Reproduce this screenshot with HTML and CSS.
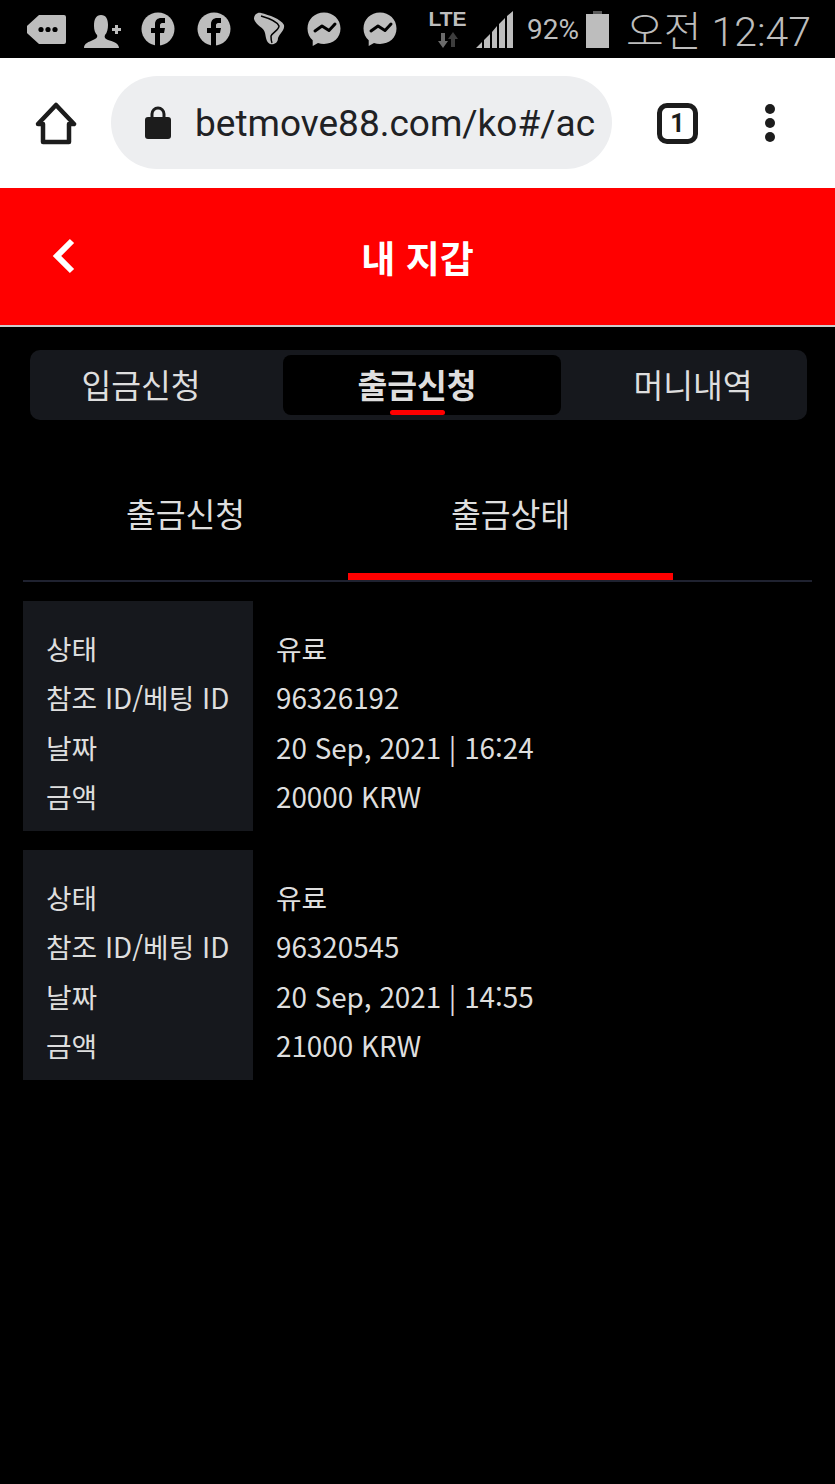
FILE: index.html
```html
<!DOCTYPE html>
<html lang="ko">
<head>
    <meta charset="UTF-8">
    <meta name="viewport" content="width=device-width, initial-scale=1.0">
    <title>내 지갑</title>
    <link rel="stylesheet" href="styles.css">
</head>
<body>

<div class="status-bar">
    <div class="status-left">
        <svg class="icon-tag" viewBox="0 0 39 31"><path d="M12 1H37a2 2 0 0 1 2 2V28a2 2 0 0 1-2 2H12L1 20a6 6 0 0 1 0-9z" fill="#bdbdbd"/><circle cx="14" cy="15.500" r="2.600" fill="#000"/><circle cx="21" cy="15.500" r="2.600" fill="#000"/><circle cx="28" cy="15.500" r="2.600" fill="#000"/></svg>
        <svg class="icon-person" viewBox="0 0 38 34"><path d="M0 34c0-5 5-6 9-8 3-1 5-3 4-5-2-2-3-5-3-9 0-7 2-11 7-11s7 4 7 10c0 4-1 8-3 10-1 2 0 4 3 5 4 1 11 3 11 8z" fill="#bdbdbd"/><path d="M28 14h3v-3h3v3h3v3h-3v3h-3v-3h-3z" fill="#bdbdbd"/></svg>
        <svg class="icon-round" viewBox="0 0 34 34"><circle cx="17" cy="17" r="16.500" fill="#bdbdbd"/><path d="M14 34V21H10v-5h4v-4c0-4 3-6 6-6h4v5h-3c-1 0-2 1-2 2v3h5l-1 5h-4v13z" fill="#000"/></svg>
        <svg class="icon-round" viewBox="0 0 34 34"><circle cx="17" cy="17" r="16.500" fill="#bdbdbd"/><path d="M14 34V21H10v-5h4v-4c0-4 3-6 6-6h4v5h-3c-1 0-2 1-2 2v3h5l-1 5h-4v13z" fill="#000"/></svg>
        <svg class="icon-telecom" viewBox="0 0 32 34"><path d="M1 7C1 2 5 0 8 1C16 3 28 7 31 13C32 18 27 21 25 26C25 31 21 33 17 32C13 30 13 25 12 21C11 15 3 14 1 7z" fill="#bdbdbd"/><path d="M8 4C15 6 24 9 26 14C26 18 20 20 18 24C18 27 18 29 19 31" stroke="#000" stroke-width="1.500" fill="none"/></svg>
        <svg class="icon-round" viewBox="0 0 34 34"><path d="M17 .5C7.700.5.500 7.300.500 16.500c0 4.800 2 9 5.200 11.800V34l5.300-3c1.900.6 3.900.900 6 .900 9.300 0 16.500-6.200 16.500-15.400S26.300.5 17 .5z" fill="#bdbdbd"/><path d="M8 19L15 14L22 18.500L28 12" fill="none" stroke="#000" stroke-width="3" stroke-linejoin="round" stroke-linecap="round"/></svg>
        <svg class="icon-round" viewBox="0 0 34 34"><path d="M17 .5C7.700.5.500 7.300.500 16.500c0 4.800 2 9 5.200 11.800V34l5.300-3c1.900.6 3.900.900 6 .900 9.300 0 16.500-6.200 16.500-15.400S26.300.5 17 .5z" fill="#bdbdbd"/><path d="M8 19L15 14L22 18.500L28 12" fill="none" stroke="#000" stroke-width="3" stroke-linejoin="round" stroke-linecap="round"/></svg>
    </div>
    <div class="status-right">
        <div class="network">
            <span class="lte">LTE</span>
            <svg class="arrows" viewBox="0 0 20 16"><path d="M5 16L0 9h3V1h4v8h3z" fill="#6b6b6b"/><path d="M15 0l5 7h-3v8h-4V7h-3z" fill="#3d3d3d"/></svg>
        </div>
        <svg class="signal" viewBox="0 0 37 37"><path d="M0 37L6 31V37zM8 29L14 23V37H8zM16 21L21 15V37H16zM23 13L29 7V37H23zM31 5L37 0V37H31z" fill="#bdbdbd"/></svg>
        <span class="battery-level">92%</span>
        <svg class="battery" viewBox="0 0 23 37"><path d="M7 0H16V3H23V37H0V3H7z" fill="#bdbdbd"/><path d="M7 0H16V3H7z" fill="#5a5a5a"/></svg>
        <span class="clock">오전 12:47</span>
    </div>
</div>

<div class="browser-bar">
    <svg class="icon-home" viewBox="0 0 42 43"><path d="M21 3L39 22H34V40H8V22H3z" fill="none" stroke="#1c1c1c" stroke-width="4.500" stroke-linejoin="round"/></svg>
    <div class="url-box">
        <svg class="icon-lock" viewBox="0 0 26 33"><path d="M7 12V8a6 6 0 0 1 12 0v4" fill="none" stroke="#1c1c1c" stroke-width="3"/><rect x="0" y="11" width="26" height="22" rx="3" fill="#1c1c1c"/></svg>
        <span class="url-text">betmove88.com/ko#/ac</span>
    </div>
    <div class="tab-count">1</div>
    <div class="menu-dots"><i></i><i></i><i></i></div>
</div>

<div class="page-header">
    <svg class="back-arrow" viewBox="0 0 24 36"><path d="M20 3L5 18L20 33" fill="none" stroke="#fff" stroke-width="6"/></svg>
    <h1>내 지갑</h1>
</div>

<div class="wallet-tabs">
    <div class="wallet-tab first">입금신청</div>
    <div class="wallet-tab active">출금신청</div>
    <div class="wallet-tab last">머니내역</div>
</div>

<div class="sub-tabs">
    <div class="sub-tab">출금신청</div>
    <div class="sub-tab active">출금상태</div>
</div>

<div class="record">
    <div class="record-labels">
        <div>상태</div>
        <div>참조 ID/베팅 ID</div>
        <div>날짜</div>
        <div>금액</div>
    </div>
    <div class="record-values">
        <div>유료</div>
        <div>96326192</div>
        <div>20 Sep, 2021 | 16:24</div>
        <div>20000 KRW</div>
    </div>
</div>

<div class="record">
    <div class="record-labels">
        <div>상태</div>
        <div>참조 ID/베팅 ID</div>
        <div>날짜</div>
        <div>금액</div>
    </div>
    <div class="record-values">
        <div>유료</div>
        <div>96320545</div>
        <div>20 Sep, 2021 | 14:55</div>
        <div>21000 KRW</div>
    </div>
</div>

</body>
</html>
```

FILE: styles.css
```css
body {
    margin: 0;
    height: 1484px;
    background-color: #000;
    color: #dedede;
    font-family: 'Noto Sans CJK KR', 'Noto Sans', sans-serif;
    overflow: hidden;
}

/* phone status bar */
.status-bar {
    height: 58px;
    display: flex;
    justify-content: space-between;
    align-items: center;
    padding: 0 24px 0 27px;
    box-sizing: border-box;
    background: #000;
    color: #bdbdbd;
}
.status-left {
    display: flex;
    align-items: center;
}
.status-left svg {
    display: block;
    flex: none;
}
.icon-tag {
    width: 39px;
    height: 31px;
    margin-right: 18px;
}
.icon-person {
    width: 38px;
    height: 34px;
    margin: 3px 19px 0 0;
}
.icon-round {
    width: 34px;
    height: 34px;
    margin-right: 22px;
}
.icon-telecom {
    width: 32px;
    height: 34px;
    margin-right: 22px;
}
.status-left .icon-round:last-child {
    margin-right: 0;
}
.status-right {
    display: flex;
    align-items: center;
}
.network {
    width: 39px;
    height: 40px;
    display: flex;
    flex-direction: column;
    align-items: center;
    margin-right: 9px;
}
.lte {
    font-family: 'Liberation Sans', sans-serif;
    font-size: 21px;
    font-weight: 700;
    line-height: 20px;
}
.arrows {
    width: 20px;
    height: 16px;
    margin-top: 3px;
}
.signal {
    width: 37px;
    height: 37px;
    margin-right: 14px;
}
.battery-level {
    font-family: Roboto, sans-serif;
    font-size: 28px;
    margin-right: 7px;
}
.battery {
    width: 23px;
    height: 37px;
    margin-right: 17px;
}
.clock {
    font-family: Roboto, 'Noto Sans CJK KR', sans-serif;
    font-size: 41px;
    font-weight: 300;
    line-height: 52px;
    padding-top: 6px;
}

/* browser toolbar */
.browser-bar {
    height: 130px;
    background: #fff;
    display: flex;
    align-items: center;
    box-sizing: border-box;
    padding: 0 0 0 35px;
}
.icon-home {
    width: 42px;
    height: 43px;
    margin-right: 34px;
}
.url-box {
    width: 501px;
    height: 93px;
    border-radius: 47px;
    background: #edeef0;
    display: flex;
    align-items: center;
    padding-left: 34px;
    box-sizing: border-box;
    margin-top: -1px;
}
.icon-lock {
    width: 26px;
    height: 33px;
    margin-right: 24px;
}
.url-text {
    font-family: Roboto, sans-serif;
    font-size: 37px;
    color: #202124;
    white-space: nowrap;
    padding-top: 2px;
}
.tab-count {
    width: 41px;
    height: 41px;
    box-sizing: border-box;
    margin-left: 45px;
    border: 5px solid #1c1c1c;
    border-radius: 10px;
    color: #1c1c1c;
    font-family: Roboto, sans-serif;
    font-size: 25px;
    font-weight: 700;
    line-height: 31px;
    text-align: center;
}
.menu-dots {
    display: flex;
    flex-direction: column;
    gap: 4px;
    margin-left: 67px;
}
.menu-dots i {
    display: block;
    width: 10px;
    height: 10px;
    border-radius: 50%;
    background: #1c1c1c;
}

/* page */
.page-header {
    position: relative;
    height: 137px;
    background: #f00;
    border-bottom: 2px solid #ccc;
    display: flex;
    align-items: center;
    justify-content: center;
}
.page-header h1 {
    margin: 0;
    color: #fff;
    font-size: 37px;
    font-weight: 700;
}
.back-arrow {
    position: absolute;
    left: 52px;
    top: 50px;
    width: 24px;
    height: 36px;
}

.wallet-tabs {
    margin: 23px 28px 0 30px;
    height: 70px;
    background: #16181d;
    border-radius: 10px;
    display: flex;
    align-items: stretch;
    font-size: 32.400px;
}
.wallet-tab {
    display: flex;
    align-items: center;
    justify-content: center;
    box-sizing: border-box;
    padding-bottom: 3px;
}
.wallet-tab.first {
    width: 253px;
    padding-right: 31px;
}
.wallet-tab.active {
    position: relative;
    width: 278px;
    margin: 5px 0;
    padding-right: 10px;
    background: #000;
    border-radius: 8px;
    font-weight: 700;
}
.wallet-tab.active::after {
    content: "";
    position: absolute;
    left: 107px;
    bottom: 0;
    width: 55px;
    height: 5px;
    border-radius: 3px;
    background: #f00;
}
.wallet-tab.last {
    width: 246px;
    padding-left: 18px;
}

.sub-tabs {
    margin: 47px 23px 19px;
    height: 113px;
    display: flex;
    border-bottom: 2px solid #1f2230;
    font-size: 32.400px;
}
.sub-tab {
    width: 325px;
    display: flex;
    align-items: center;
    justify-content: center;
    box-sizing: border-box;
    padding-bottom: 22px;
}
.sub-tab.active {
    border-bottom: 7px solid #f00;
    padding-bottom: 15px;
}

.record {
    margin: 0 0 19px 23px;
    height: 230px;
    display: flex;
    font-size: 27.800px;
    line-height: 49.400px;
}
.record-labels {
    width: 230px;
    box-sizing: border-box;
    padding: 22.700px 0 0 23px;
    background: #16181d;
}
.record-values {
    padding: 22.700px 0 0 23px;
}
```
